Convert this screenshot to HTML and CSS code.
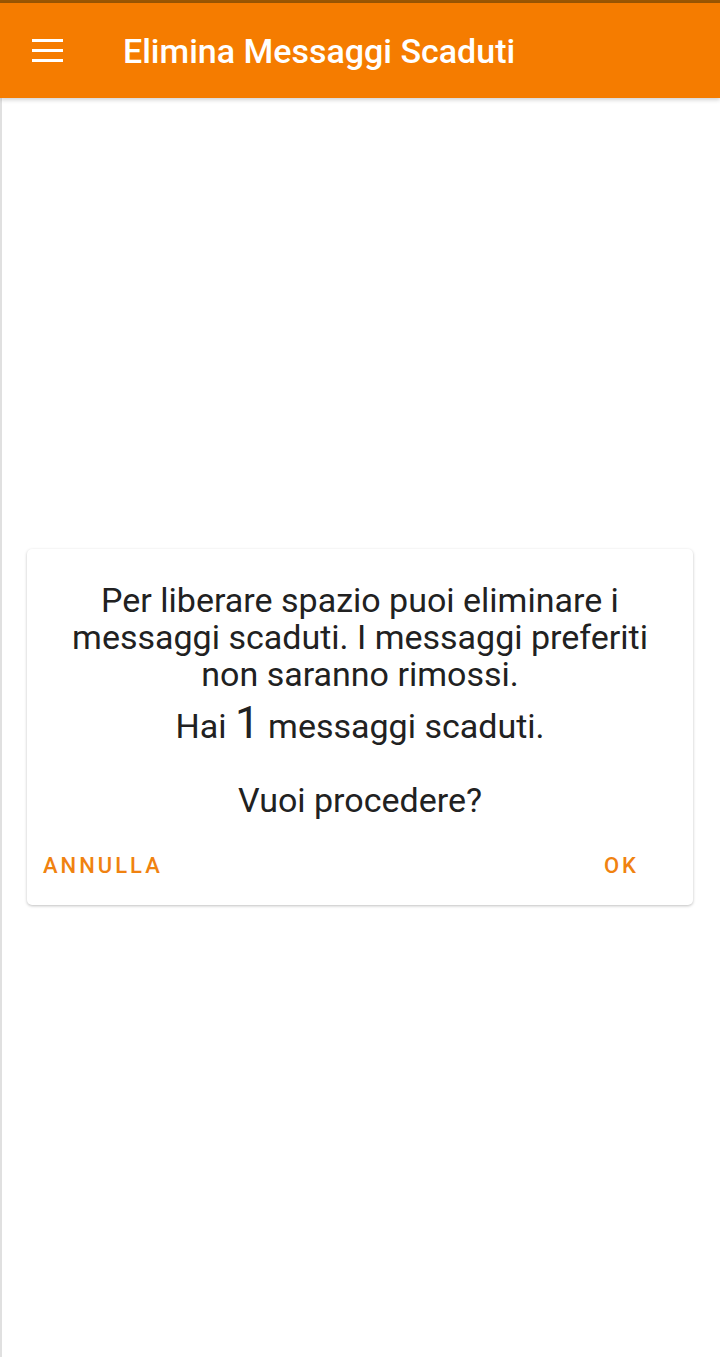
FILE: index.html
```html
<!DOCTYPE html>
<html lang="it">
<head>
    <meta charset="UTF-8">
    <meta name="viewport" content="width=device-width, initial-scale=1.0">
    <title>Elimina Messaggi Scaduti</title>
    <link rel="stylesheet" href="styles.css">
</head>
<body>
<div class="status-bar"></div>
<header class="toolbar">
    <button class="menu-btn" aria-label="Menu">
        <svg width="32" height="24" viewBox="0 0 32 24">
            <rect x="0" y="0" width="31" height="3" fill="#fff"/>
            <rect x="0" y="10" width="31" height="3" fill="#fff"/>
            <rect x="0" y="20" width="31" height="3" fill="#fff"/>
        </svg>
    </button>
    <h1>Elimina Messaggi Scaduti</h1>
</header>

<main class="content">
    <div class="dialog">
        <p class="dialog-text">
            Per liberare spazio puoi eliminare i<br>
            messaggi scaduti. I messaggi preferiti<br>
            non saranno rimossi.
        </p>
        <p class="dialog-count">Hai <span class="count">1</span> messaggi scaduti.</p>
        <p class="dialog-question">Vuoi procedere?</p>
        <div class="dialog-actions">
            <button class="action">ANNULLA</button>
            <button class="action">OK</button>
        </div>
    </div>
</main>
</body>
</html>
```

FILE: styles.css
```css
html, body {
    height: 100%;
}

body {
    margin: 0;
    display: flex;
    flex-direction: column;
    background: #ffffff;
    font-family: Roboto, "Noto Sans", Arial, sans-serif;
    color: #212121;
}

.status-bar {
    height: 3px;
    background: #9a5603;
}

.toolbar {
    display: flex;
    align-items: center;
    height: 95px;
    background: #f57c00;
    box-shadow: 0 2px 4px rgba(0, 0, 0, 0.18);
    position: relative;
    z-index: 1;
}

.menu-btn {
    display: flex;
    margin: 0 0 0 32px;
    padding: 0;
    background: none;
    border: none;
}

.toolbar h1 {
    margin: 0 0 0 59px;
    font-size: 34px;
    font-weight: 500;
    color: #ffffff;
}

.content {
    flex: 1;
    display: flex;
    align-items: flex-start;
    padding: 451px 27px 0 25px;
    border-left: 2px solid #e0e0e0;
}

.dialog {
    flex: 1;
    padding: 33px 16px 16px;
    background: #ffffff;
    border-radius: 5px;
    box-shadow: 0 1px 3px rgba(0, 0, 0, 0.25);
}

.dialog-text,
.dialog-count,
.dialog-question {
    margin: 0;
    text-align: center;
    font-size: 34px;
    line-height: 37px;
}

.dialog-count {
    margin-top: 15px;
}

.count {
    font-size: 44px;
    line-height: 0;
}

.dialog-question {
    margin-top: 37px;
}

.dialog-actions {
    display: flex;
    justify-content: space-between;
    align-items: center;
    height: 48px;
    margin-top: 22px;
    padding: 0 38px 0 0;
}

.action {
    padding: 0;
    background: none;
    border: none;
    font-family: inherit;
    font-size: 22px;
    font-weight: 500;
    letter-spacing: 3px;
    color: #f08210;
}
```
